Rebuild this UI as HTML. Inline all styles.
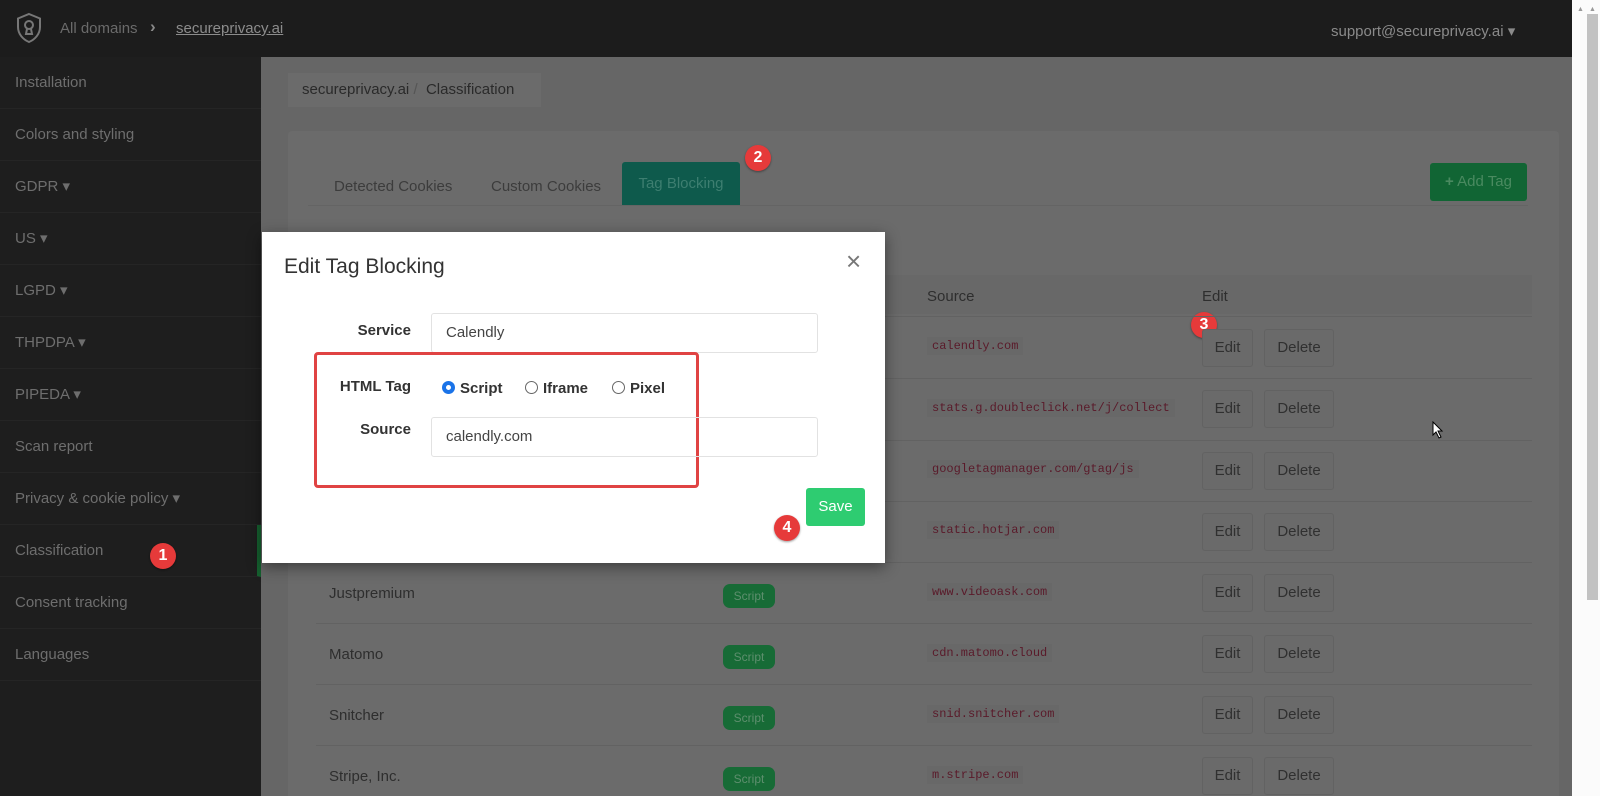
<!DOCTYPE html>
<html style="width:1600px;height:796px;overflow:hidden"><head><meta charset="utf-8"><style>
*{box-sizing:border-box;margin:0;padding:0}
html,body{width:1600px;height:796px;overflow:hidden}
body{background:#666;font-family:"Liberation Sans",sans-serif;position:relative}
.abs{position:absolute}
.top{left:0;top:0;width:1572px;height:57px;background:#1c1c1c}
.side{left:0;top:57px;width:261px;height:739px;background:#1e1e1e}
.side div{height:52px;border-bottom:1px solid #252525;color:#6e6e6e;font-size:15px;line-height:51px;padding-left:15px}
.main{left:261px;top:57px;width:1311px;height:739px;background:#666}
.bc{left:288px;top:73px;width:253px;height:34px;background:#6b6b6b;color:#2a2a2a;font-size:15px;line-height:34px;padding-left:14px}
.card{left:288px;top:131px;width:1271px;height:665px;background:#6b6b6b;border-radius:4px 4px 0 0}
.tab{top:162px;height:43px;line-height:34px;font-size:15px;color:#3c3c3c}
.row{left:316px;width:1216px;height:61px;border-top:1px solid #626262}
.t{font-size:15px;color:#2e2e2e}
.code{font-family:"Liberation Mono",monospace;font-size:12px;color:#5a1a2a;background:#686868;padding:2px 5px}
.btn{height:38px;border:1px solid #626262;border-radius:3px;background:#6a6a6a;color:#303030;font-size:15px;line-height:36px;text-align:center}
.badge{width:52px;height:24px;border-radius:7px;background:#176b36;color:#5e8f6e;font-size:12px;line-height:24px;text-align:center}
.num{width:26px;height:26px;border-radius:50%;background:#e63a3a;color:#fff;font-size:16px;font-weight:bold;line-height:26px;text-align:center;box-shadow:0 1px 2px rgba(0,0,0,.4)}
.modal{left:262px;top:232px;width:623px;height:331px;background:#fff;box-shadow:0 4px 14px rgba(0,0,0,.45)}
.lbl{font-size:15px;font-weight:bold;color:#333;text-align:right;width:100px}
.inp{left:169px;width:387px;height:40px;border:1px solid #e2e2e2;border-radius:3px;font-size:15px;color:#444;line-height:38px;padding-left:14px}
.rad{width:13px;height:13px;border:1px solid #666;border-radius:50%;background:#fff}
</style></head><body>
<div class="abs top">
<svg class="abs" style="left:15px;top:12px" width="28" height="32" viewBox="0 0 28 32" fill="none" stroke="#777" stroke-width="2"><path d="M14 2 L25 6.5 V15 C25 22 20 27.5 14 30 C8 27.5 3 22 3 15 V6.5 Z"/><circle cx="14" cy="13" r="4"/><path d="M12 17 L11 22 H17 L16 17"/></svg>
<div class="abs" style="left:60px;top:20px;color:#6a6a6a;font-size:15px">All domains</div>
<div class="abs" style="left:150px;top:17px;color:#8a8a8a;font-size:17px;font-weight:bold">&#x203A;</div>
<div class="abs" style="left:176px;top:20px;color:#8c8c8c;font-size:15px;text-decoration:underline">secureprivacy.ai</div>
<div class="abs" style="left:1331px;top:22px;color:#8a8a8a;font-size:15px">support@secureprivacy.ai ▾</div>
</div>
<div class="abs side">
<div>Installation</div><div>Colors and styling</div><div>GDPR ▾</div><div>US ▾</div><div>LGPD ▾</div><div>THPDPA ▾</div><div>PIPEDA ▾</div><div>Scan report</div><div>Privacy &amp; cookie policy ▾</div><div style="border-right:4px solid #15602f">Classification</div><div>Consent tracking</div><div>Languages</div>
</div>
<div class="abs main"></div>
<div class="abs bc">secureprivacy.ai <span style="color:#555">/</span> &nbsp;Classification</div>
<div class="abs card"></div>
<div class="abs" style="left:308px;top:205px;width:1220px;border-top:1px solid #646464"></div>
<div class="abs tab" style="left:334px;top:170px">Detected Cookies</div>
<div class="abs tab" style="left:491px;top:170px">Custom Cookies</div>
<div class="abs tab" style="left:622px;top:162px;width:118px;background:#0e5a4c;color:#3d7e70;text-align:center;line-height:43px;border-radius:3px 3px 0 0">Tag Blocking</div>
<div class="abs num" style="left:745px;top:145px">2</div>
<div class="abs" style="left:1430px;top:163px;width:97px;height:38px;background:#116534;border-radius:3px;color:#4a8a60;font-size:15px;line-height:38px;text-align:center"><b>+</b> Add Tag</div>
<div class="abs" style="left:316px;top:275px;width:1216px;height:39px;background:#686868"></div>
<div class="abs t" style="left:927px;top:288px">Source</div>
<div class="abs t" style="left:1202px;top:288px">Edit</div>
<div class="abs num" style="left:1191px;top:312px">3</div>

<div class="abs row" style="top:316px"></div>
<div class="abs row" style="top:378px"></div>
<div class="abs row" style="top:440px"></div>
<div class="abs row" style="top:501px"></div>
<div class="abs row" style="top:562px"></div>
<div class="abs row" style="top:623px"></div>
<div class="abs row" style="top:684px"></div>
<div class="abs row" style="top:745px;height:51px"></div>

<div class="abs code" style="left:927px;top:337px">calendly.com</div>
<div class="abs code" style="left:927px;top:399px">stats.g.doubleclick.net/j/collect</div>
<div class="abs code" style="left:927px;top:460px">googletagmanager.com/gtag/js</div>
<div class="abs code" style="left:927px;top:521px">static.hotjar.com</div>
<div class="abs code" style="left:927px;top:583px">www.videoask.com</div>
<div class="abs code" style="left:927px;top:644px">cdn.matomo.cloud</div>
<div class="abs code" style="left:927px;top:705px">snid.snitcher.com</div>
<div class="abs code" style="left:927px;top:766px">m.stripe.com</div>

<div class="abs t" style="left:329px;top:585px">Justpremium</div>
<div class="abs t" style="left:329px;top:646px">Matomo</div>
<div class="abs t" style="left:329px;top:707px">Snitcher</div>
<div class="abs t" style="left:329px;top:768px">Stripe, Inc.</div>
<div class="abs badge" style="left:723px;top:584px">Script</div>
<div class="abs badge" style="left:723px;top:645px">Script</div>
<div class="abs badge" style="left:723px;top:706px">Script</div>
<div class="abs badge" style="left:723px;top:767px">Script</div>

<div class="abs btn" style="left:1202px;top:329px;width:51px">Edit</div><div class="abs btn" style="left:1264px;top:329px;width:70px">Delete</div>
<div class="abs btn" style="left:1202px;top:390px;width:51px">Edit</div><div class="abs btn" style="left:1264px;top:390px;width:70px">Delete</div>
<div class="abs btn" style="left:1202px;top:452px;width:51px">Edit</div><div class="abs btn" style="left:1264px;top:452px;width:70px">Delete</div>
<div class="abs btn" style="left:1202px;top:513px;width:51px">Edit</div><div class="abs btn" style="left:1264px;top:513px;width:70px">Delete</div>
<div class="abs btn" style="left:1202px;top:574px;width:51px">Edit</div><div class="abs btn" style="left:1264px;top:574px;width:70px">Delete</div>
<div class="abs btn" style="left:1202px;top:635px;width:51px">Edit</div><div class="abs btn" style="left:1264px;top:635px;width:70px">Delete</div>
<div class="abs btn" style="left:1202px;top:696px;width:51px">Edit</div><div class="abs btn" style="left:1264px;top:696px;width:70px">Delete</div>
<div class="abs btn" style="left:1202px;top:757px;width:51px">Edit</div><div class="abs btn" style="left:1264px;top:757px;width:70px">Delete</div>

<div class="abs num" style="left:150px;top:543px">1</div>

<svg class="abs" style="left:1432px;top:421px" width="12" height="18" viewBox="0 0 12 18"><path d="M1 1 V14 L4 11 L7 17 L9 16 L6 10 H10 Z" fill="#fff" stroke="#000" stroke-width="1"/></svg>

<div class="abs" style="left:1572px;top:0;width:28px;height:796px;background:#fbfbfb"></div>
<div class="abs" style="left:1587px;top:14px;width:11px;height:586px;background:#c2c2c2"></div>
<div class="abs" style="left:1577px;top:6px;color:#999;font-size:7px">▲</div>
<div class="abs" style="left:1589px;top:6px;color:#999;font-size:7px">▲</div>

<div class="abs modal">
<div class="abs" style="left:22px;top:23px;font-size:21px;color:#333">Edit Tag Blocking</div>
<div class="abs" style="left:584px;top:14px;font-size:26px;color:#777">×</div>
<div class="abs lbl" style="left:49px;top:90px">Service</div>
<div class="abs inp" style="top:81px">Calendly</div>
<div class="abs" style="left:52px;top:120px;width:385px;height:136px;border:3px solid #e04343;border-radius:4px"></div>
<div class="abs lbl" style="left:49px;top:146px">HTML Tag</div>
<div class="abs rad" style="left:180px;top:149px;border:4px solid #1a73e8"></div>
<div class="abs" style="left:198px;top:148px;font-size:15px;font-weight:bold;color:#333">Script</div>
<div class="abs rad" style="left:263px;top:149px"></div>
<div class="abs" style="left:281px;top:148px;font-size:15px;font-weight:bold;color:#333">Iframe</div>
<div class="abs rad" style="left:350px;top:149px"></div>
<div class="abs" style="left:368px;top:148px;font-size:15px;font-weight:bold;color:#333">Pixel</div>
<div class="abs lbl" style="left:49px;top:189px">Source</div>
<div class="abs inp" style="top:185px">calendly.com</div>
<div class="abs" style="left:544px;top:256px;width:59px;height:38px;background:#2ecc71;border-radius:3px;color:#fff;font-size:15px;line-height:38px;text-align:center">Save</div>
<div class="abs num" style="left:512px;top:283px">4</div>
</div>
</body></html>
